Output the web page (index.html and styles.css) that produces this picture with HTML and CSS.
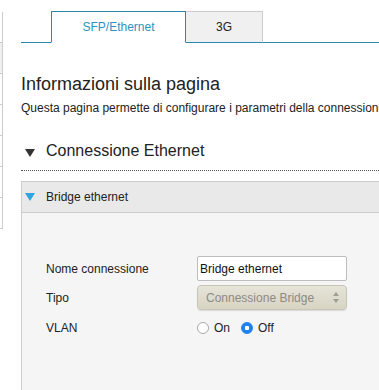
FILE: index.html
```html
<!DOCTYPE html>
<html lang="it">
<head>
    <meta charset="UTF-8">
    <meta name="viewport" content="width=device-width, initial-scale=1.0">
    <title>Connessione Ethernet</title>
    <link rel="stylesheet" href="styles.css">
</head>
<body>
    <div class="page">
        <div class="sidebar">
            <div class="side-item"></div>
            <div class="side-item side-item-active"></div>
            <div class="side-item"></div>
            <div class="side-item"></div>
            <div class="side-item"></div>
            <div class="side-item"></div>
            <div class="side-item"></div>
        </div>

        <div class="main">
            <div class="tabs">
                <div class="tab tab-active">SFP/Ethernet</div>
                <div class="tab">3G</div>
            </div>

            <h1 class="page-title">Informazioni sulla pagina</h1>
            <p class="page-desc">Questa pagina permette di configurare i parametri della connessione Ethernet.</p>

            <h2 class="section-title">
                <svg class="caret" width="10" height="8" viewBox="0 0 10 8"><path d="M0 0H10L5 8Z" fill="#333"/></svg>
                Connessione Ethernet
            </h2>

            <div class="panel">
                <div class="panel-head">
                    <svg class="caret" width="10" height="8" viewBox="0 0 10 8"><path d="M0 0H10L5 8Z" fill="#2ea5e0"/></svg>
                    Bridge ethernet
                </div>
                <div class="panel-body">
                    <div class="form-grid">
                        <label for="conn-name">Nome connessione</label>
                        <input type="text" id="conn-name" class="text-input" value="Bridge ethernet">

                        <label>Tipo</label>
                        <div class="select-box">
                            <span>Connessione Bridge</span>
                            <svg width="6" height="11" viewBox="0 0 6 11"><path d="M0 4L3 0L6 4Z M0 7L3 11L6 7Z" fill="#a09e94"/></svg>
                        </div>

                        <label>VLAN</label>
                        <div class="radios">
                            <label class="radio-opt"><input type="radio" name="vlan"> On</label>
                            <label class="radio-opt"><input type="radio" name="vlan" checked> Off</label>
                        </div>
                    </div>
                </div>
            </div>
        </div>
    </div>
</body>
</html>
```

FILE: styles.css
```css
html, body {
    margin: 0;
    overflow: hidden;
    background: #fff;
}

body {
    font-family: "Liberation Sans", Arial, sans-serif;
    color: #222;
}

.page {
    display: flex;
    align-items: flex-start;
}

.sidebar {
    flex: none;
    width: 2px;
    margin-top: 12px;
    border-right: 1px solid #ccc;
}

.side-item {
    height: 30px;
    border-bottom: 1px solid #ccc;
}

.side-item-active {
    background-color: #f0f0f0;
}

.main {
    flex: none;
    width: 420px;
    margin-left: 18px;
}

.tabs {
    display: flex;
    margin-top: 11px;
    padding-left: 30px;
    border-bottom: 1px solid #2a88b0;
}

.tab {
    height: 30px;
    line-height: 30px;
    margin-bottom: -1px;
    text-align: center;
    font-size: 12px;
    width: 76px;
    background-color: #f0f0f0;
    border: 1px solid #ccc;
    border-left: none;
    border-bottom-color: #2a88b0;
}

.tab-active {
    width: 133px;
    color: #2a93c3;
    background-color: #fff;
    border: 1px solid #2a88b0;
    border-bottom-color: #fff;
}

.page-title {
    margin: 30px 0 0;
    font-size: 18px;
    line-height: 22px;
    font-weight: normal;
    color: #222;
}

.page-desc {
    margin: 6px 0 0;
    font-size: 12px;
    line-height: 14px;
    white-space: nowrap;
}

.section-title {
    display: flex;
    align-items: center;
    margin: 26px 0 0;
    padding: 0 0 9px 4px;
    font-size: 16px;
    line-height: 20px;
    font-weight: normal;
    border-bottom: 1px dotted #555;
}

.section-title .caret {
    margin: 4px 11px 0 0;
}

.panel {
    margin-top: 10px;
    border-left: 1px solid #ccc;
}

.panel-head {
    display: flex;
    align-items: center;
    height: 30px;
    padding-left: 3px;
    font-size: 12px;
    background-color: #e9e9e9;
    border-top: 1px solid #ccc;
    border-bottom: 1px solid #ccc;
}

.panel-head .caret {
    margin-right: 11px;
}

.panel-body {
    background-color: #f5f5f5;
    padding: 43px 0 80px 24px;
}

.form-grid {
    display: grid;
    grid-template-columns: 151px 150px;
    grid-template-rows: 25px 25px 28px;
    row-gap: 4px;
    align-items: center;
    font-size: 12px;
}

.text-input {
    box-sizing: border-box;
    width: 150px;
    height: 25px;
    margin: 0;
    padding: 0 2px;
    font: 12px "Liberation Sans", Arial, sans-serif;
    color: #111;
    background: #fff;
    border: 1px solid #bdbdbd;
    border-radius: 2px;
}

.select-box {
    box-sizing: border-box;
    display: flex;
    align-items: center;
    justify-content: space-between;
    height: 25px;
    padding: 0 7px 0 8px;
    color: #8c8b84;
    background: linear-gradient(#e6e4d9, #d7d4c3);
    border: 1px solid #c9c6b6;
    border-radius: 4px;
    box-shadow: 0 1px 1px rgba(0, 0, 0, 0.12);
}

.radios {
    display: flex;
    align-items: center;
}

.radio-opt {
    display: flex;
    align-items: center;
    margin-right: 11px;
}

.radio-opt input {
    appearance: none;
    width: 12px;
    height: 12px;
    margin: 0 5px 0 0;
    border: 1px solid #a8a8a8;
    border-radius: 50%;
    background: #fff;
}

.radio-opt input:checked {
    border-color: #1f82ee;
    background: radial-gradient(circle, #fff 0 2px, #1f82ee 2.5px);
}
```
